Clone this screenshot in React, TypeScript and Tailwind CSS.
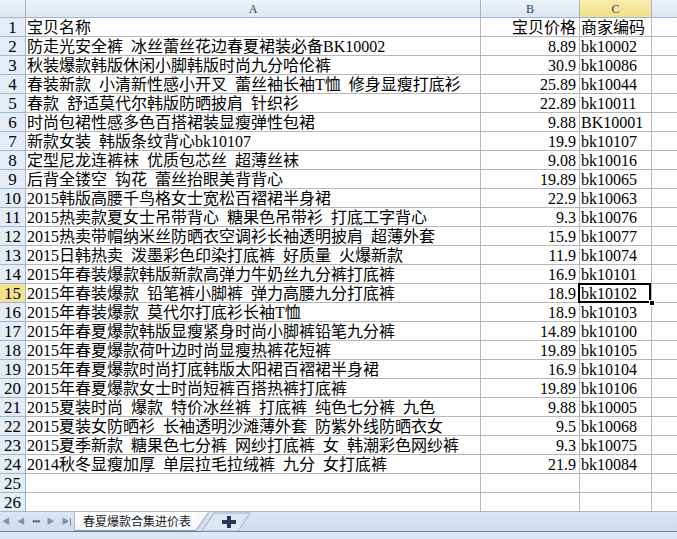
import React from "react";

const rows: [string, string, string][] = [
  ["宝贝名称", "宝贝价格", "商家编码"],
  ["防走光安全裤 冰丝蕾丝花边春夏裙装必备BK10002", "8.89", "bk10002"],
  ["秋装爆款韩版休闲小脚韩版时尚九分哈伦裤", "30.9", "bk10086"],
  ["春装新款 小清新性感小开叉 蕾丝袖长袖T恤 修身显瘦打底衫", "25.89", "bk10044"],
  ["春款 舒适莫代尔韩版防晒披肩 针织衫", "22.89", "bk10011"],
  ["时尚包裙性感多色百搭裙装显瘦弹性包裙", "9.88", "BK10001"],
  ["新款女装 韩版条纹背心bk10107", "19.9", "bk10107"],
  ["定型尼龙连裤袜 优质包芯丝 超薄丝袜", "9.08", "bk10016"],
  ["后背全镂空 钩花 蕾丝抬眼美背背心", "19.89", "bk10065"],
  ["2015韩版高腰千鸟格女士宽松百褶裙半身裙", "22.9", "bk10063"],
  ["2015热卖款夏女士吊带背心 糖果色吊带衫 打底工字背心", "9.3", "bk10076"],
  ["2015热卖带帽纳米丝防晒衣空调衫长袖透明披肩 超薄外套", "15.9", "bk10077"],
  ["2015日韩热卖 泼墨彩色印染打底裤 好质量 火爆新款", "11.9", "bk10074"],
  ["2015年春装爆款韩版新款高弹力牛奶丝九分裤打底裤", "16.9", "bk10101"],
  ["2015年春装爆款 铅笔裤小脚裤 弹力高腰九分打底裤", "18.9", "bk10102"],
  ["2015年春装爆款 莫代尔打底衫长袖T恤", "18.9", "bk10103"],
  ["2015年春夏爆款韩版显瘦紧身时尚小脚裤铅笔九分裤", "14.89", "bk10100"],
  ["2015年春夏爆款荷叶边时尚显瘦热裤花短裤", "19.89", "bk10105"],
  ["2015年春夏爆款时尚打底韩版太阳裙百褶裙半身裙", "16.9", "bk10104"],
  ["2015年春夏爆款女士时尚短裤百搭热裤打底裤", "19.89", "bk10106"],
  ["2015夏装时尚 爆款 特价冰丝裤 打底裤 纯色七分裤 九色", "9.88", "bk10005"],
  ["2015夏装女防晒衫 长袖透明沙滩薄外套 防紫外线防晒衣女", "9.5", "bk10068"],
  ["2015夏季新款 糖果色七分裤 网纱打底裤 女 韩潮彩色网纱裤", "9.3", "bk10075"],
  ["2014秋冬显瘦加厚 单层拉毛拉绒裤 九分 女打底裤", "21.9", "bk10084"],
  ["", "", ""],
  ["", "", ""],
];

const SELECTED_ROW = 15;

function ColHeader({ label, w, active }: { label: string; w: string; active?: boolean }) {
  return (
    <div
      className={`${w} h-full flex items-center justify-center border-r border-[#9eb6ce] text-[12px] leading-none text-[#27415f] ${
        active ? "bg-gradient-to-b from-[#f9ecb0] to-[#f3df86]" : "bg-gradient-to-b from-[#eef3f9] to-[#dde6f1]"
      }`}
    >
      {label}
    </div>
  );
}

export default function App() {
  return (
    <div className="w-[677px] h-[539px] bg-white overflow-hidden flex flex-col text-black font-['Liberation_Serif','Noto_Sans_CJK_SC',serif]">
      {/* column headers */}
      <div className="flex h-[18px] shrink-0 border-b border-[#9eb6ce]">
        <div className="w-[26px] h-full border-r border-[#9eb6ce] bg-gradient-to-b from-[#eef3f9] to-[#dde6f1]" />
        <ColHeader label="A" w="w-[455px]" />
        <ColHeader label="B" w="w-[99px]" />
        <ColHeader label="C" w="w-[72px]" active />
        <div className="flex-1 h-full bg-gradient-to-b from-[#eef3f9] to-[#dde6f1]" />
      </div>

      {/* grid rows */}
      <div className="flex flex-col shrink-0">
        {rows.map((r, i) => {
          const n = i + 1;
          const sel = n === SELECTED_ROW;
          return (
            <div key={n} className={`flex h-[19px] ${sel ? "relative z-10" : ""}`}>
              <div
                className={`w-[26px] h-full flex items-center justify-center border-r border-b border-[#9eb6ce] text-[17px] leading-none ${
                  sel ? "bg-[#f6e18c]" : "bg-[#e4ecf7]"
                }`}
              >
                {n}
              </div>
              <div className="w-[455px] h-full border-r border-b border-[#b8b8b8] pl-[1px] text-[16px] leading-[19px] whitespace-pre overflow-hidden [word-spacing:4px]">
                {r[0]}
              </div>
              <div className="w-[99px] h-full border-r border-b border-[#b8b8b8] pr-[3px] text-right text-[16px] leading-[19px] whitespace-nowrap">
                {r[1]}
              </div>
              <div className="relative w-[72px] h-full border-r border-b border-[#b8b8b8] pl-[1px] text-[16px] leading-[19px] whitespace-nowrap">
                {r[2]}
                {sel && (
                  <>
                    <div className="absolute -left-[2px] -top-[1px] w-[73px] h-[20px] border-2 border-black pointer-events-none" />
                    <div className="absolute -right-[4px] -bottom-[4px] w-[6px] h-[6px] bg-black border border-white z-20" />
                  </>
                )}
              </div>
              <div className="flex-1 h-full border-b border-[#b8b8b8]" />
            </div>
          );
        })}
      </div>

      {/* sheet tab bar */}
      <div className="flex h-[20px] shrink-0 bg-gradient-to-b from-[#dbe6f4] to-[#cfdcee] border-b border-[#6b7c93]">
        <div className="w-[75px] h-full flex items-center gap-[7px] pl-[2px] text-[8px] text-[#8393a8] border-r border-[#a9b9cf]">
          <span>◀</span>
          <span>◀</span>
          <span className="tracking-[-1px] text-[10px] text-[#4d5d73]">•••</span>
          <span>▶</span>
          <span className="flex items-center">▶<span className="inline-block w-[1px] h-[8px] bg-[#8393a8]" /></span>
        </div>
        <div className="relative h-full flex">
          <div className="h-[19px] pl-[8px] pr-[4px] bg-gradient-to-b from-[#ffffff] to-[#f1f5fb] border-b border-[#8a9bb2] flex items-center text-[12px] leading-none font-['Noto_Sans_CJK_SC',sans-serif] text-[#1b1b1b]">
            春夏爆款合集进价表
          </div>
          <svg width="14" height="20" viewBox="0 0 14 20" className="block">
            <path d="M0 0 L0 19 L1 19 L13 1 L13 0 Z" fill="#f5f8fc" />
            <path d="M0.5 19 L13.5 0.5" stroke="#8a9bb2" strokeWidth="1" fill="none" />
          </svg>
          <svg width="50" height="20" viewBox="0 0 50 20" className="block -ml-[8px]">
            <path d="M1 19 L13 1 L49 1 L37 19 Z" fill="#dde7f3" stroke="#9fb0c6" strokeWidth="1" />
            <path d="M21 8 H26 V4 H30 V8 H35 V12 H30 V16 H26 V12 H21 Z" fill="#23395b" />
          </svg>
        </div>
        <div className="flex-1" />
      </div>
      <div className="flex-1 bg-[#dce7f5]" />
    </div>
  );
}
